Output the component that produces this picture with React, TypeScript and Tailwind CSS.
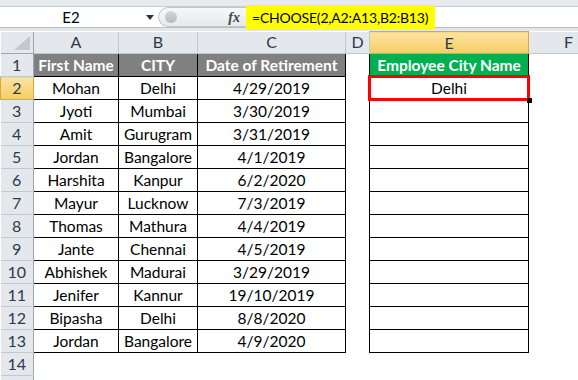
import React from 'react';

// Employee data for columns A:C
const rows = [
  ['Mohan', 'Delhi', '4/29/2019'],
  ['Jyoti', 'Mumbai', '3/30/2019'],
  ['Amit', 'Gurugram', '3/31/2019'],
  ['Jordan', 'Bangalore', '4/1/2019'],
  ['Harshita', 'Kanpur', '6/2/2020'],
  ['Mayur', 'Lucknow', '7/3/2019'],
  ['Thomas', 'Mathura', '4/4/2019'],
  ['Jante', 'Chennai', '4/5/2019'],
  ['Abhishek', 'Madurai', '3/29/2019'],
  ['Jenifer', 'Kannur', '19/10/2019'],
  ['Bipasha', 'Delhi', '8/8/2020'],
  ['Jordan', 'Bangalore', '4/9/2020'],
];

const colLetters = ['A', 'B', 'C', 'D', 'E', 'F'];

const rowHead =
  'h-[23px] border-r border-b border-r-[#9ea5af] border-b-[#c3c8cf] bg-[#e4e7eb] p-0 text-center text-[16px] text-[#2a3a4f]';
const rowHeadSel =
  'h-[23px] border border-[#e1a445] bg-gradient-to-b from-[#fbe3a2] to-[#f6cd62] p-0 text-center text-[16px] text-[#2a3a4f]';

const FormulaBar: React.FC = () => (
  <div className="bg-[#e3e6ea]">
    <div className="h-[7px] border-b border-[#c9cdd3] bg-[#e8ebee]" />
    <div className="flex h-[21px] items-stretch border-b border-[#b9bec6] bg-white">
      {/* Name box */}
      <div className="relative flex w-[158px] items-center justify-center text-[15px] text-black">
        <span className="-ml-[16px]">E2</span>
        <span className="absolute right-[4px] top-[8px] h-0 w-0 border-x-[4px] border-t-[5px] border-x-transparent border-t-[#333]" />
      </div>
      {/* Grip + fx */}
      <div className="flex w-[88px] items-center rounded-l-full border border-r-0 border-[#c2c6cc] bg-gradient-to-b from-[#f7f8f9] to-[#e6e8eb]">
        <span className="ml-[6px] h-[12px] w-[12px] rounded-full bg-gradient-to-b from-[#d4d7db] to-[#b5b9bf]" />
        <span className="ml-auto mr-[6px] font-['Liberation_Serif',serif] text-[14px] italic font-bold text-[#444]">
          fx
        </span>
      </div>
      {/* Formula */}
      <div className="flex flex-1 items-center">
        <div className="-my-[2px] flex h-[25px] w-[189px] items-center whitespace-nowrap bg-[#ffff00] pl-[6px] text-[14px] tracking-[-0.2px] text-black">
          =CHOOSE(2,A2:A13,B2:B13)
        </div>
      </div>
    </div>
    <div className="h-[3px]" />
  </div>
);

const App: React.FC = () => {
  return (
    <div className="h-[380px] w-[578px] overflow-hidden bg-white font-['Lato',sans-serif]">
      <FormulaBar />
      <table className="w-[608px] table-fixed border-collapse leading-[20px]">
        <colgroup>
          <col className="w-[33px]" />
          <col className="w-[85px]" />
          <col className="w-[79px]" />
          <col className="w-[148px]" />
          <col className="w-[24px]" />
          <col className="w-[159px]" />
          <col className="w-[80px]" />
        </colgroup>
        <thead>
          <tr>
            <th className="relative h-[22px] border-r border-b border-[#9ea5af] bg-[#e4e7eb] p-0">
              <svg width="16" height="14" viewBox="0 0 16 14" className="absolute right-[3px] bottom-[3px]">
                <polygon points="16,0 16,14 0,14" fill="#c4c8cd" />
              </svg>
            </th>
            {colLetters.map((c) => (
              <th
                key={c}
                className={
                  c === 'E'
                    ? 'h-[22px] border border-[#e1a445] bg-gradient-to-b from-[#fbe3a2] to-[#f6cd62] p-0 text-[16px] font-normal text-[#2a3a4f]'
                    : 'h-[22px] border-r border-b border-[#c3c8cf] bg-[#e4e7eb] p-0 text-[16px] font-normal text-[#2a3a4f]'
                }
              >
                {c}
              </th>
            ))}
          </tr>
        </thead>
        <tbody className="text-[15.5px] text-black">
          <tr>
            <td className={rowHead}>1</td>
            <td className="border border-black bg-[#808080] p-0 text-center font-bold text-white">First Name</td>
            <td className="border border-black bg-[#808080] p-0 text-center font-bold text-white">CITY</td>
            <td className="border border-black bg-[#808080] p-0 text-center font-bold text-white">Date of Retirement</td>
            <td className="p-0" />
            <td className="border border-black bg-[#00b050] p-0 text-center font-bold text-white">Employee City Name</td>
            <td className="p-0" />
          </tr>
          {rows.map((r, i) => {
            const n = i + 2;
            const selected = n === 2;
            return (
              <tr key={n}>
                <td className={selected ? rowHeadSel : rowHead}>{n}</td>
                <td className="border border-black p-0 text-center">{r[0]}</td>
                <td className="border border-black p-0 text-center">{r[1]}</td>
                <td className="border border-black p-0 text-center">{r[2]}</td>
                <td className="p-0" />
                <td className="relative border border-black p-0 text-center">
                  {selected && (
                    <>
                      <div className="absolute -inset-[2px] border-[3px] border-[#ff0000]" />
                      <div className="absolute -right-[4px] -bottom-[4px] h-[5px] w-[5px] bg-black" />
                      Delhi
                    </>
                  )}
                </td>
                <td className="p-0" />
              </tr>
            );
          })}
          {[14, 15].map((n) => (
            <tr key={n}>
              <td className={rowHead}>{n}</td>
              <td className="p-0" colSpan={6} />
            </tr>
          ))}
        </tbody>
      </table>
    </div>
  );
};

export default App;
